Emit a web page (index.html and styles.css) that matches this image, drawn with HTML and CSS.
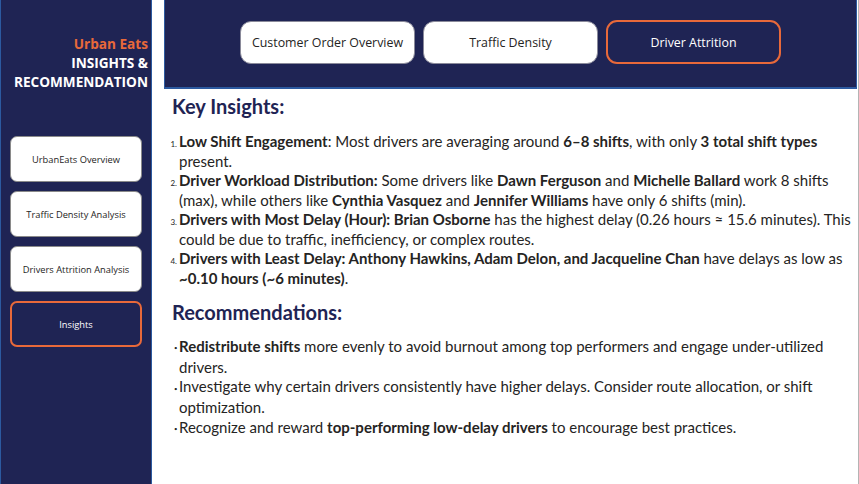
FILE: index.html
```html
<!DOCTYPE html>
<html lang="en">
<head>
<meta charset="utf-8">
<title>Urban Eats – Insights &amp; Recommendation</title>
<link rel="stylesheet" href="styles.css">
</head>
<body>
<div class="page">
  <aside class="sidebar">
    <div class="brand">
      <div class="brand-name">Urban Eats</div>
      <div>INSIGHTS &amp;</div>
      <div>RECOMMENDATION</div>
    </div>
    <nav class="side-nav">
      <div class="side-btn">UrbanEats Overview</div>
      <div class="side-btn">Traffic Density Analysis</div>
      <div class="side-btn">Drivers Attrition Analysis</div>
      <div class="side-btn active">Insights</div>
    </nav>
  </aside>
  <main class="main">
    <header class="topbar">
      <div class="tab">Customer Order Overview</div>
      <div class="tab">Traffic Density</div>
      <div class="tab active">Driver Attrition</div>
    </header>
    <section class="content">
      <h2 class="heading">Key Insights:</h2>
      <ol class="insights">
        <li><b>Low Shift Engagement</b>: Most drivers are averaging around <b>6–8 shifts</b>, with only <b>3 total shift types</b><br>present.</li>
        <li><b>Driver Workload Distribution:</b> Some drivers like <b>Dawn Ferguson</b> and <b>Michelle Ballard</b> work 8 shifts<br>(max), while others like <b>Cynthia Vasquez</b> and <b>Jennifer Williams</b> have only 6 shifts (min).</li>
        <li><b>Drivers with Most Delay (Hour): Brian Osborne</b> has the highest delay (0.26 hours ≈ 15.6 minutes). This<br>could be due to traffic, inefficiency, or complex routes.</li>
        <li><b>Drivers with Least Delay: Anthony Hawkins, Adam Delon, and Jacqueline Chan</b> have delays as low as<br><b>~0.10 hours (~6 minutes)</b>.</li>
      </ol>
      <h2 class="heading rec-heading">Recommendations:</h2>
      <ul class="recs">
        <li><b>Redistribute shifts</b> more evenly to avoid burnout among top performers and engage under-utilized<br>drivers.</li>
        <li>Investigate why certain drivers consistently have higher delays. Consider route allocation, or shift<br>optimization.</li>
        <li>Recognize and reward <b>top-performing low-delay drivers</b> to encourage best practices.</li>
      </ul>
    </section>
  </main>
</div>
</body>
</html>
```

FILE: styles.css
```css
* { box-sizing: border-box; }

html, body {
  margin: 0;
  padding: 0;
  background: #ffffff;
}

.page {
  display: flex;
  width: 859px;
  height: 484px;
  padding-right: 1px;
  border-right: 1px solid #b4b4b4;
  overflow: hidden;
}

/* ---------- Sidebar ---------- */
.sidebar {
  width: 152px;
  flex: 0 0 152px;
  background: #1f2454;
  border-left: 1px solid #2c5aa0;
  border-right: 1px solid #2c5aa0;
  padding: 34px 0 0 0;
  display: flex;
  flex-direction: column;
}

.brand {
  text-align: right;
  padding-right: 3px;
  font-family: "Open Sans", "DejaVu Sans", sans-serif;
  font-weight: 700;
  font-size: 13.6px;
  line-height: 19px;
  color: #ffffff;
}

.brand-name {
  color: #e8693a;
}

.side-nav {
  margin-top: 45px;
  padding: 0 9px;
  display: flex;
  flex-direction: column;
  gap: 9px;
}

.side-btn {
  height: 46px;
  background: #ffffff;
  border: 1px solid #8a8a8a;
  border-radius: 7px;
  display: flex;
  align-items: center;
  justify-content: center;
  font-family: "Open Sans", "DejaVu Sans", sans-serif;
  font-size: 9.3px;
  color: #252423;
}

.side-btn.active {
  background: #1f2454;
  border: 2.5px solid #e8693a;
  color: #ffffff;
}

/* ---------- Main ---------- */
.main {
  flex: 1;
  margin-left: 12px;
  display: flex;
  flex-direction: column;
}

.topbar {
  height: 89px;
  flex: 0 0 89px;
  background: #1f2454;
  border-left: 1px solid #2c5aa0;
  border-right: 1px solid #2c5aa0;
  border-bottom: 2px solid #2c5aa0;
  display: flex;
  justify-content: center;
  align-items: flex-start;
  gap: 8px;
  padding-top: 21px;
}

.tab {
  width: 175px;
  height: 43px;
  background: #ffffff;
  border: 1px solid #8a8a9a;
  border-radius: 11px;
  display: flex;
  align-items: center;
  justify-content: center;
  font-family: "Open Sans", "DejaVu Sans", sans-serif;
  font-size: 12.4px;
  color: #252423;
}

.tab.active {
  background: #1f2454;
  border: 2.5px solid #e8693a;
  color: #ffffff;
  height: 44px;
  margin-top: -1px;
}

.content {
  padding: 0 0 0 8px;
  font-family: "Lato", "Liberation Sans", sans-serif;
  color: #252423;
}

.heading {
  margin: 5px 0 0 0;
  font-family: "Lato", "Liberation Sans", sans-serif;
  font-size: 20px;
  line-height: 24px;
  font-weight: 700;
  color: #1f2454;
}

.rec-heading {
  margin-top: 12px;
}

.insights,
.recs {
  margin: 14px 0 0 0;
  padding-left: 7px;
  font-size: 15px;
  line-height: 19.5px;
  white-space: nowrap;
}

.recs {
  margin-top: 13px;
  list-style: none;
}

.insights li::marker {
  font-size: 8px;
  color: #252423;
}

.recs li::before {
  content: "•";
  font-size: 6px;
  display: inline-block;
  width: 0;
  margin-left: -5px;
  margin-right: 5px;
  vertical-align: middle;
}

b {
  font-weight: 700;
  color: #252423;
}
```
